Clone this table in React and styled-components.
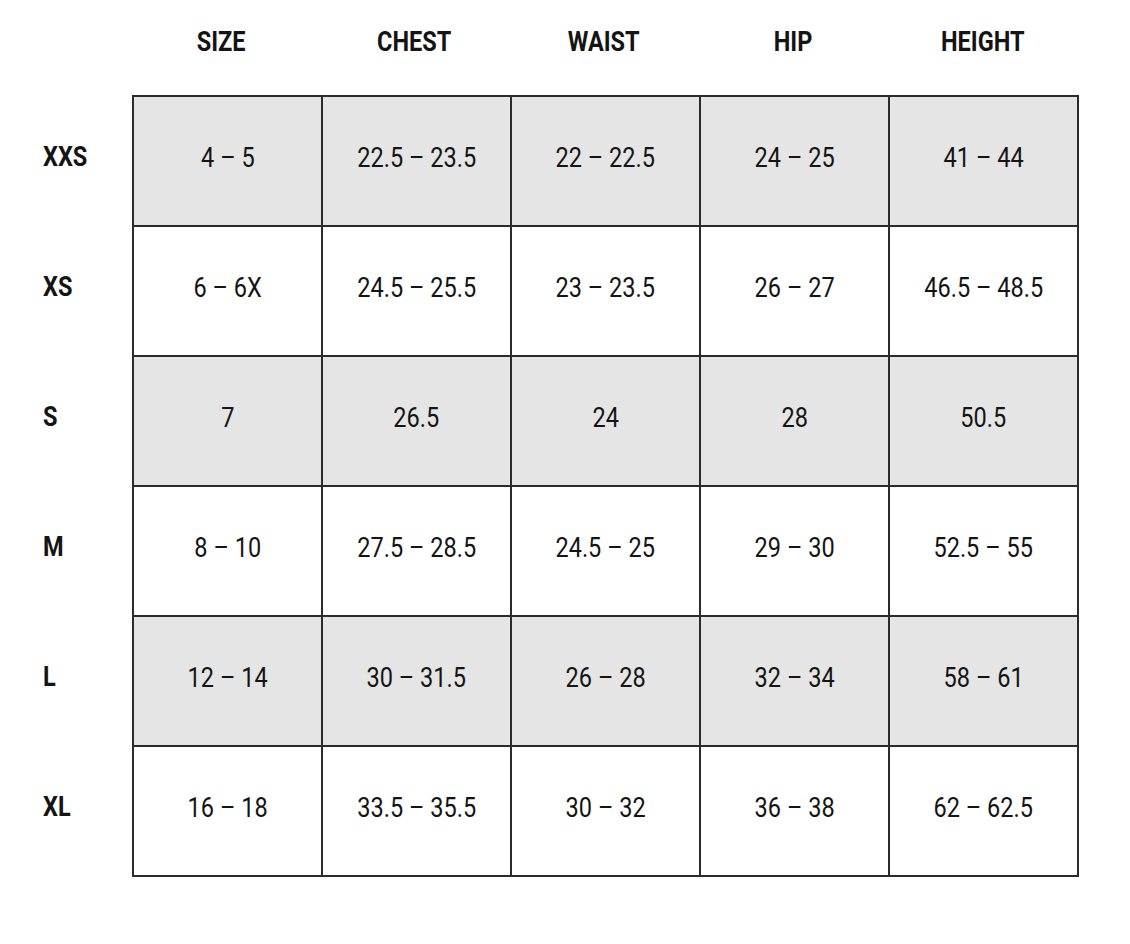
import React from 'react';
import styled, {createGlobalStyle} from 'styled-components';

const GlobalStyle = createGlobalStyle`
  html, body {
    margin: 0;
    padding: 0;
    background: #fff;
  }
  body {
    font-family: Roboto, "Liberation Sans", sans-serif;
    color: #141414;
  }
`

const Page = styled.div`
  width: 1130px;
  height: 944px;
  background: #fff;
`

const Row = styled.div`
  display: grid;
  grid-template-columns: 132px repeat(5, 189px);
`

// condensed look: Roboto squeezed horizontally
const Narrow = styled.span`
  display: inline-block;
  white-space: nowrap;
  transform: scaleX(0.84);
  transform-origin: ${p => (p.$left ? 'left center' : 'center')};
`

const HeadCell = styled.div`
  height: 95px;
  padding-bottom: 12px;
  padding-right: ${p => p.$nudge || 0}px;
  box-sizing: border-box;
  display: flex;
  align-items: center;
  justify-content: center;
  font-weight: 700;
  font-size: 28px;
`

const Label = styled.div`
  height: 130px;
  box-sizing: border-box;
  padding-bottom: 8px;
  display: flex;
  align-items: center;
  padding-left: 43px;
  font-weight: 700;
  font-size: 28px;
`

const Cell = styled.div`
  height: 130px;
  box-sizing: border-box;
  padding-bottom: 8px;
  display: flex;
  align-items: center;
  justify-content: center;
  font-size: 28px;
  font-weight: 400;
  background: ${p => (p.$shaded ? '#e4e5e4' : '#fff')};
  border-left: 2px solid #2b2b2b;
  border-top: 2px solid #2b2b2b;
  ${p => p.$last && 'border-right: 2px solid #2b2b2b; width: 191px;'}
  ${p => p.$bottom && 'border-bottom: 2px solid #2b2b2b; height: 132px;'}
`

const columns = [
  {name: 'SIZE', nudge: 10},
  {name: 'CHEST', nudge: 2},
  {name: 'WAIST', nudge: 2},
  {name: 'HIP', nudge: 0},
  {name: 'HEIGHT', nudge: 0},
]

const rows = [
  ['XXS', '4 – 5', '22.5 – 23.5', '22 – 22.5', '24 – 25', '41 – 44'],
  ['XS', '6 – 6X', '24.5 – 25.5', '23 – 23.5', '26 – 27', '46.5 – 48.5'],
  ['S', '7', '26.5', '24', '28', '50.5'],
  ['M', '8 – 10', '27.5 – 28.5', '24.5 – 25', '29 – 30', '52.5 – 55'],
  ['L', '12 – 14', '30 – 31.5', '26 – 28', '32 – 34', '58 – 61'],
  ['XL', '16 – 18', '33.5 – 35.5', '30 – 32', '36 – 38', '62 – 62.5'],
]

export default function App() {
  return (
    <Page>
      <GlobalStyle />
      <Row>
        <div />
        {columns.map(c => (
          <HeadCell key={c.name} $nudge={c.nudge}><Narrow>{c.name}</Narrow></HeadCell>
        ))}
      </Row>
      {rows.map(([label, ...values], i) => (
        <Row key={label}>
          <Label><Narrow $left>{label}</Narrow></Label>
          {values.map((v, j) => (
            <Cell
              key={j}
              $shaded={i % 2 === 0}
              $last={j === values.length - 1}
              $bottom={i === rows.length - 1}
            >
              <Narrow>{v}</Narrow>
            </Cell>
          ))}
        </Row>
      ))}
    </Page>
  );
}
